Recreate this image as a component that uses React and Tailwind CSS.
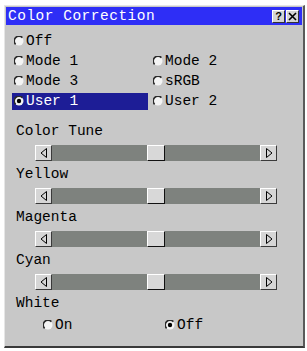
import React from 'react';

const mono = "font-['Liberation_Mono','DejaVu_Sans_Mono',monospace]";

function Radio({ on }) {
  return (
    <svg width="10" height="10" viewBox="0 0 10 10" className="shrink-0">
      <circle cx="5" cy="5" r="4.5" fill="#f4f4f4" />
      <path d="M8.4 1.6 A4.6 4.6 0 0 0 1.6 8.4" fill="none" stroke="#2a2a2a" strokeWidth="1.6" />
      {on && <circle cx="5" cy="5" r="2.2" fill="#000" />}
    </svg>
  );
}

function Option({ label, on, selected }) {
  return (
    <div
      className={`flex h-[17px] items-center gap-[2px] pl-[2px] ${
        selected ? 'bg-[#1d1d96] text-white' : 'text-black'
      }`}
    >
      <Radio on={on} />
      <span>{label}</span>
    </div>
  );
}

function ArrowBtn({ dir }) {
  return (
    <div className="flex h-[16px] w-[17px] shrink-0 items-center justify-center border border-t-white border-l-white border-r-[#3a3a3a] border-b-[#3a3a3a] bg-[#d6d6d6]">
      <svg width="8" height="10" viewBox="0 0 8 10">
        {dir === 'left' ? (
          <path d="M6.5 0.5 L1 5 L6.5 9.5 Z" fill="none" stroke="#000" strokeWidth="1" />
        ) : (
          <path d="M1.5 0.5 L7 5 L1.5 9.5 Z" fill="none" stroke="#000" strokeWidth="1" />
        )}
      </svg>
    </div>
  );
}

function Slider() {
  return (
    <div className="flex h-[22px] items-center pl-[30px]">
      <div className="flex h-[16px] w-[242px]">
        <ArrowBtn dir="left" />
        <div className="flex flex-1 justify-center bg-[#7e827e]">
          <div className="h-[16px] w-[18px] border border-t-white border-l-white border-r-[#111] border-b-[#111] bg-[#d8d8d8]" />
        </div>
        <ArrowBtn dir="right" />
      </div>
    </div>
  );
}

function Label({ children }) {
  return <div className="flex h-[21px] items-center pl-[11px]">{children}</div>;
}

export default function App() {
  const modes = [
    ['Mode 1', 'Mode 2'],
    ['Mode 3', 'sRGB'],
  ];
  return (
    <div className={`h-[351px] w-[307px] bg-white pl-[4px] pt-[5px] text-[14.5px] leading-none ${mono}`}>
      <div className="h-[343px] w-[301px] border-t border-l border-r-2 border-b-2 border-t-[#e6e6e6] border-l-[#e6e6e6] border-r-[#5a5a5a] border-b-[#3a3a3a] bg-[#c8c8c8]">
        <div className="mx-[1px] mt-[1px] flex h-[18px] items-center justify-between bg-[#2e2ef6] pl-[2px] pr-[3px]">
          <span className="tracking-[0.5px] text-white">Color Correction</span>
          <div className="flex gap-[1px]">
            <div className="flex h-[13px] w-[13px] items-center justify-center border border-t-white border-l-white border-r-[#333] border-b-[#333] bg-[#d4d4d4] font-['Liberation_Sans',sans-serif] text-[11px] font-bold text-black">
              ?
            </div>
            <div className="flex h-[13px] w-[13px] items-center justify-center border border-t-white border-l-white border-r-[#333] border-b-[#333] bg-[#d4d4d4]">
              <svg width="9" height="9" viewBox="0 0 9 9">
                <path d="M1 1 L8 8 M8 1 L1 8" stroke="#000" strokeWidth="1.6" />
              </svg>
            </div>
          </div>
        </div>

        <div className="mt-[6px]">
          <div className="flex h-[20px] items-center pl-[7px]">
            <Option label="Off" />
          </div>
          {modes.map(([a, b]) => (
            <div key={a} className="flex h-[20px] items-center">
              <div className="ml-[7px] w-[136px]">
                <Option label={a} />
              </div>
              <div className="pl-[3px]">
                <Option label={b} />
              </div>
            </div>
          ))}
          <div className="flex h-[20px] items-center">
            <div className="ml-[7px] w-[136px]">
              <Option label="User 1" on selected />
            </div>
            <div className="pl-[3px]">
              <Option label="User 2" />
            </div>
          </div>
        </div>

        <div className="mt-[10px]">
          <Label>Color Tune</Label>
          <Slider />
          <Label>Yellow</Label>
          <Slider />
          <Label>Magenta</Label>
          <Slider />
          <Label>Cyan</Label>
          <Slider />
          <Label>White</Label>
          <div className="flex h-[22px] items-center">
            <div className="ml-[36px] w-[120px]">
              <Option label="On" />
            </div>
            <div className="pl-[2px]">
              <Option label="Off" on />
            </div>
          </div>
        </div>
      </div>
    </div>
  );
}
